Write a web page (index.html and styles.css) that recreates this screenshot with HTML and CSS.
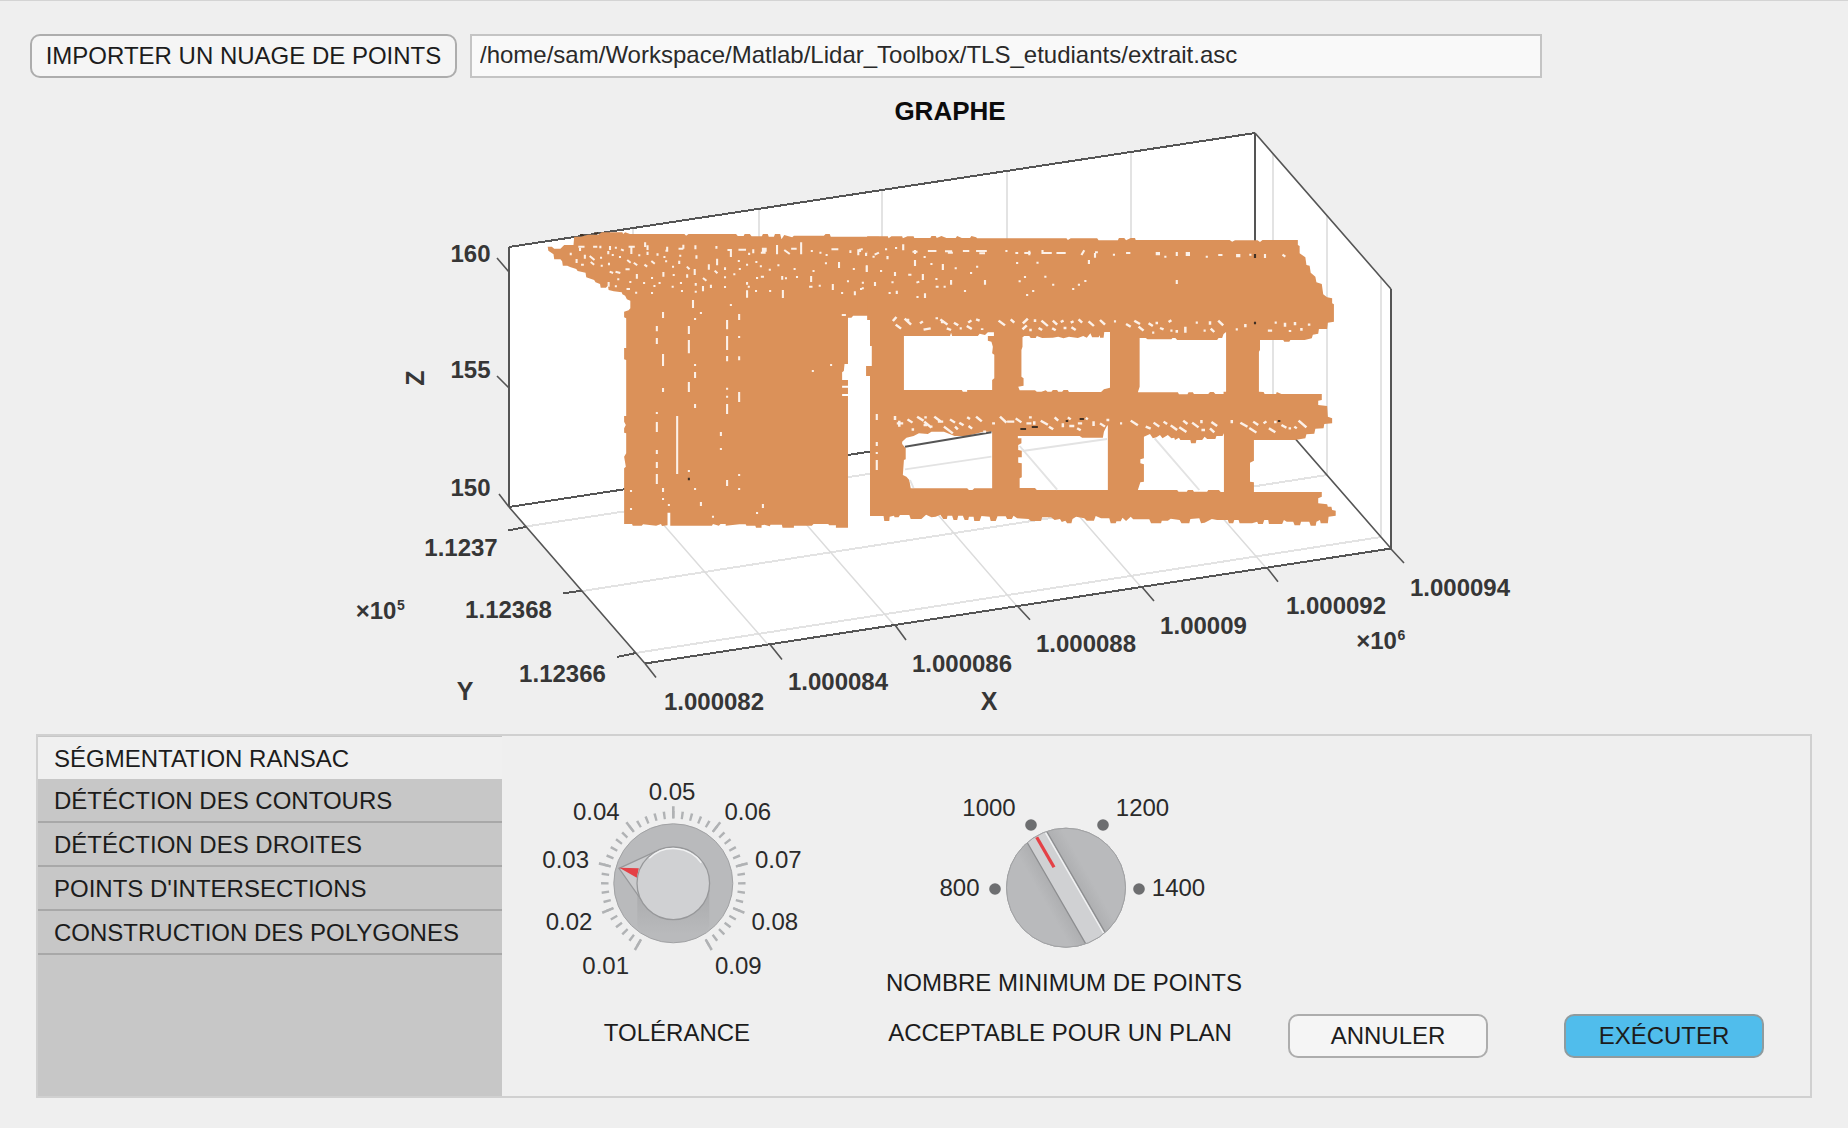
FILE: index.html
```html
<!DOCTYPE html>
<html lang="fr">
<head>
<meta charset="utf-8">
<title>Nuage de points</title>
<link rel="stylesheet" href="styles.css">
</head>
<body>
<header class="toolbar">
  <button class="btn import" type="button">IMPORTER UN NUAGE DE POINTS</button>
  <input class="path" type="text" value="/home/sam/Workspace/Matlab/Lidar_Toolbox/TLS_etudiants/extrait.asc">
</header>

<main>
<svg class="plot" width="1848" height="655" viewBox="0 79 1848 655">
  <text class="title" x="950" y="119.500" text-anchor="middle">GRAPHE</text>
  <!-- walls and floor -->
  <path fill="#fff" d="M509 247 1255 133 1391 289V548.500L645 663.500 509 507Z"/>
  <g class="grid">
    <path class="upright" d="M633 228V490M759 209V469M882 190V451M1007 171V431M1131 152V412M1273 153V412M1327 215V475M1381 277V536"/>
    <path class="upright" d="M526 526.500 1273 412M582.500 591 1327 475M635.500 653 1381 537"/>
    <path class="deep" d="M768 644.500 632 488.600M894 625 758 469M1017.500 606.700 882 450M1141 587 1005 431M1266 567.700 1130 412"/>
  </g>
  <g class="axes">
    <path class="upright" d="M509 247V507M1255 133V392M1391 289V548.500"/>
    <path class="upright" d="M509 247 1255 133M509 507 1255 392.500M645 663.500 1391 548.500"/>
    <path class="thin" d="M1255 133 1391 289M1255 392.500 1391 548.500M509 507 645 663.500"/>
    <path class="thin" d="M645 663.500l11 14M770 644.500l12 15M895 625l11 15M1018 606.700l12 13M1142 587l12 14M1267 567.700l11 14M1391 549l13 14M509 272l-12-14M509 388l-12-12M509 507l-10-13"/>
    <path class="upright" d="M526 527l-18 3.500M582 590.500l-19 3M636 653l-19 4"/>
  </g>

  <!-- facade, left part -->
  <g transform="translate(340 120) scale(.34439 .33333)">
    <path class="cloud" d="M603 380H615L622 386H640L651 375H678L680 350H700L720 344H750L760 337H820L822 342 828 337 842 342H1000L1005 347 1012 342H1150L1155 348H1172L1175 342H1190L1195 349H1225L1228 342H1242L1245 350H1260L1263 342H1278L1282 358 1290 345 1313 352 1318 347H1405L1410 342H1422L1425 350H1565V587H1490L1485 593H1475V732H1465L1463 753 1458 757V780H1475V797H1458V803H1475V822H1458V828H1475V1223H1440V1216H1420L1418 1212H1375L1370 1217H1318V1223H1285L1283 1214H1250L1248 1219 1232 1214 1224 1216V1223H1208L1206 1217H1180L1178 1213H1160L1120 1217V1212H1105L1100 1217 1083 1212 1080 1217H959V1178H951V1216L935 1218 932 1212 918 1217 880 1213 876 1217H850L848 1212H825V1045L830 1040 825 1010 831 1000V940L825 938V925L830 915 825 905V888H831V720L825 718V684H831V595L825 592V575L838 571 843 565V542L833 538 828 527 820 523 818 517 795 514 780 510 778 497 772 503H757L755 492 742 487 738 480 715 472 713 458 690 453 686 447 668 441 660 437H647L645 424 640 418H622L620 403 605 392Z"/>
    <path class="gap" d="M692 380h18M735 380h12M756 377v8M784 378v12M798 383h6M846 382v20M838 380h18M886 367v14M893 376v14M950 380v12M945 392h8M983 386h14M997 374v12M1032 376v12M1093 378v8M1125 390h12M1135 387v24M1157 389h22M1200 388v12M1222 398h14M1225 386h14M1225 392h14M1269 375v28M1290 390l16 12M1310 386h16M1339 367v36M1370 390v6M1392 398h6M1427 388h20M1482 391v8M1505 388v18M1512 388h6M1530 396h10M1530 399h10M1560 393h8"/>
    <path class="gap" d="M697 383v10M687 417v12M711 404v12M725 408l14 12M670 398v8M700 434h8M728 426l10 8M758 410v6M757 437h6M779 393v10M781 428v8M792 402v6M810 411h6M816 388l8 4M834 420l10 8M853 428l10 8M862 462v14M866 406h6M884 434l8 6M893 395v10M904 423l10 8M922 400v7M939 411h6M939 456v14M944 424h6M967 437v6M985 407h6M985 422v10M1007 440l8 8M1008 463v10M1030 447v18M1035 406v10M1054 474l10 8M1054 498v16M1071 433v16M1077 494v10M1088 452l8 8M1095 416v20M1118 442v8M1118 469v6M1142 463h6M1158 420v6M1158 447h6M1188 398v7M1182 431v6M1184 500h6M1206 426h6M1208 474h6M1222 436v6M1222 470h9M1245 449h6M1273 433v6M1284 468v11M1292 475h6M1317 447h6M1324 471h6M1368 468v18M1372 453h6M1362 500h10M1408 430h6M1410 405h6M1449 426v18M1431 492v18M1472 484h6M1489 447h6M1495 514v12M1515 505h6M1530 437v18M1553 486v12M1542 460h6M1390 497h6M1455 519h6M783 455l10 4M800 455l14 4M829 448h12M805 478h6M840 486h6M857 518h6M880 489h6M903 474h6M903 519h6M910 498h6M925 489h6M963 500h6M966 465h6M987 489h6M990 513h6M1033 489v8M1033 512v6M780 486v14M798 499h6M832 507h10M1118 498v6M1182 486v8M1182 511v22M1205 513h6M1246 513h6M1286 510v24"/>
    <path class="gap" d="M1025 540v24M938 576v18M1045 579h6M1031 594v6M1132 555h6M1159 582v18M920 618v16M920 654v18M938 702v36M1013 618v24M1013 660v40M1124 600v28M1124 648v42M1124 708v16M1159 648v6M1159 709v12M1031 732v6M1031 756v18M938 804v12M1013 786v30M1031 852v12M1124 803v6M1124 827v6M1124 852v30M1159 816v30M920 876v6M920 906v30M920 990v12M920 1026v18M920 1062v30M979 888v174M1106 936v12M1106 984v6M1124 1080v18M1159 1062v6M1159 1104v6M1031 1104v6M1013 1050v6M938 1104v12M938 1134v6M845 1110v6M845 1164v6M955 1152v6M1048 1146v12M1080 1190h6M1208 1179h6M1228 1152v12M1370 753h6M1423 735h6M1457 585h12"/>
    <path class="speck" d="M1013 1073v8M697 345h11M738 340h11"/>
  </g>

  <!-- facade, right part -->
  <g transform="translate(860 120) scale(.35714 .33333)">
    <path class="cloud" d="M20 349H78L80 355 88 349H118L120 355 133 349H150L152 354H197L200 348H212L215 354 228 348 242 354H268L272 348 285 354H308L312 348 325 352 328 355H578L582 360 590 355H664L668 361H722L725 354H740L745 361 758 354H770L772 360H1035L1042 365 1050 361H1113L1120 366 1127 360H1226V375L1231 378V400L1247 412 1250 435 1259 437 1262 458 1275 470 1278 487 1293 492 1297 523 1308 532 1322 535V550L1327 553V605L1310 608 1308 627H1285L1283 641 1268 644 1265 655 1245 660H1205L1202 665H1188L1185 660H1120V690L1117 695V815L1130 816 1133 822H1165L1167 816 1180 822H1293V840L1283 842V855L1308 858 1310 890 1322 895V910L1300 912 1298 925 1275 926 1272 941 1250 943 1247 955 1218 960H1103V1022L1092 1028V1085L1103 1087V1116H1293V1130L1283 1135V1150L1308 1153 1310 1160H1320L1322 1170 1332 1172V1187L1312 1190 1310 1210H1290L1288 1200 1278 1205 1276 1217H1262L1258 1205H1235L1232 1216H1217L1213 1205H1195L1187 1200 1182 1212H1145L1143 1200H1132L1128 1212H1115L1112 1205 1098 1210H1063L1060 1200H1048L1045 1210H1033L1030 1200H1000L985 1197 965 1208 955 1210 950 1195 925 1197 922 1210H900L895 1200 870 1196 862 1202H845L843 1210H815L810 1198H765L758 1190 745 1203 735 1193 730 1204H718L716 1210H702L698 1195H675L660 1188 655 1202H635L628 1195 605 1190 595 1197 592 1210H580L575 1202 565 1206 560 1197 545 1200 535 1192H510L507 1203H478L472 1197 440 1195 430 1187 425 1197H412L408 1189H385L380 1203H366L363 1190 340 1188 335 1203H320L318 1190H305L303 1200H293L288 1187H275L272 1200H262L258 1187H245L243 1197H233L225 1184 212 1190 200 1192 185 1184 172 1197H142L138 1185H112L108 1192H97L95 1187 83 1190 82 1203H68L66 1188H28V768H17V738H33V678H28V600H20Z"/>
    <path class="cut" d="M123 648H252L255 638 258 648H330L335 641 350 645 358 637H375V648H358V662L368 665 372 680 370 700 376 704V775L370 780V810H300V815H288L285 810H123Z"/>
    <path class="cut" d="M460 648H474L478 654H492L495 648 510 654 540 653 555 650 570 655 585 650 610 654 625 648 635 653 645 640 650 652H668L672 646V653H682L684 636H700V803L683 808 675 816H585L582 810H570L566 815H555L552 810H540L536 815H525L520 811 508 815H495L490 811H447L443 800 458 797V775L452 770V690L455 680V652Z"/>
    <path class="cut" d="M783 654H800L805 658H872L875 654H883L888 660H1000L1004 654H1014L1018 642 1025 636V815H1018V822H995L990 816H980L975 822H935L932 817H920L917 823H893L890 817H778L783 800Z"/>
    <path class="cut" d="M118 965 130 953 150 948 165 940 190 942 200 935H235L265 948H300L345 935H370V1105H320L315 1110H305L300 1105H142L138 1080 130 1070 120 1065 123 1020 128 1018V985L118 972Z"/>
    <path class="cut" d="M442 948H615L622 953H680L683 935 690 920 694 915V1110H495L490 1104H447V1075L453 1072V1030L443 1028V1012H453V992L443 990V975L452 970V955H442Z"/>
    <path class="cut" d="M795 950 812 942 820 955 830 952 840 945 847 955 862 945 872 955 880 953 882 960 893 953 897 960H925L927 970H940L942 960H958L965 950 972 957H995L998 948 1015 948 1019 940V1116H1010L1005 1110H975L972 1115H935L932 1110H918L915 1115H892L888 1110H778L785 1087 795 1085V1033L785 1030V1018L795 1015Z"/>
    <!-- floor lines seen through the openings -->
    <g class="grid seen">
      <path d="M126 1048 368 1010M140 1080 150 1104M455 993 692 957M447 978 552 1109M825 955 950 1110"/>
    </g>
    <path class="edge" d="M126 980 368 937"/>
    <path class="gap" d="M0 386v10M17 398v10M41 404l12-6M70 388h6M98 384h6M121 373v18M147 395h14M154 390v12M190 393h24M238 394h20M246 398h14M288 393h18M325 393h30M334 400h16M407 393h6M435 399h8M460 399h18M474 392v14M511 390v12M513 399h24M550 399h26M620 405l8-14M658 397h8M658 399v14M708 404h6M745 399h12M831 396v10M837 396v10M852 410h6M887 396v12M915 396v12M921 396v12M968 410h6M1003 405h12M1056 402v10M1062 402v10M1090 404h6M1134 402v12M1183 404l8 6M35 410h6M77 408v10M154 420v18M181 408v6M197 432h6M19 436v20M56 453h6M98 456v12M135 464h9M176 462v18M232 432v18M91 484v6M5 488h6M42 486v12M80 519h6M103 512v10M0 507h6M158 488l8-3M158 531h6M182 520v14M214 474v6M212 500h8M234 500h6M255 480v14M291 513h6M308 459h6M325 440h6M350 480v14M437 429h6M494 428h6M641 420v12M459 471h6M444 484h6M516 470h6M538 494h6M482 513h6M465 525h6M594 507h6M610 494h6M628 483h6M887 480v12M268 442v6"/>
    <path class="gap wide" d="M92 603l10-12M100 614l15 12M125 596l18 18M128 600h10M168 610l8-6M178 629l20-4M215 592v6M225 598l20 16M230 600v10M243 625l12 5M263 608l12 8M279 625h6M303 608l9-7M299 618l14 9M325 598l10 4M342 625v5M388 602l18 14M422 598l10 10M456 610l14-14M455 628l12-12M474 630h7M490 598v8M500 624l10 6M508 602l18 16M540 602l12 12M538 625l10 6M562 606l8-4M570 624h8M590 608l8-4M592 622l12 8M612 598l10 10M640 604l15 14M672 600l14 14M711 604h6M745 612l13 8M768 602l16 10M780 620l14 12M808 610l12 8M818 638h6M831 605v8M840 624l10 4M864 606l8-5M869 632h6M887 630v8M911 620v18M940 608h6M962 632h6M980 604v10M982 626l10 10M1003 602l14 14M1052 628h6M1079 612v10M1142 632h12M1161 608h6M1190 608v12M1204 630v6M1218 606v10M1236 624v8M1254 614h7"/>
    <path class="gap" d="M47 882v18M47 966v12M47 996v6M47 1020v30"/>
    <path class="gap wide" d="M98 888v12M103 910h18M110 902v18M133 898l14 10M148 925v7M160 890l18 12M180 892h7M180 905l20 18M178 915h10M195 920h8M208 890l20 16M218 905h15M235 920l25 20M252 898l14 10M278 908l12 8M266 920l8 8M300 892l8 5M304 918l10 8M325 890l16 14M345 935h8M370 910h8M392 890l18 18M412 905h20M436 895l16 12M473 892h8M466 910h14M488 904v10M506 902l20 12M529 920l12 8M545 892l10 10M568 910v12M582 892l8 6M586 918h14M610 910h12M608 925l10 6M632 894l6 4M654 904v14M672 910l14 10M690 900h8M728 910h6M758 902l20 14M800 920l14 6M822 908l16 12M850 905l10 7M870 916l18 14M894 922l20 14M905 902l12 10M930 908l18 14M956 900v10M956 930h10M980 925l12 12M984 906l16 12M1041 900v10M1065 908l20 12M1090 924l20 14M1101 905l14 10M1130 910l8-6M1145 925l18 12M1163 902v8M1180 915l14 8M1200 925h7M1228 902l22 20M1216 920l7 5"/>
    <path class="speck" d="M1106 402v12M1106 605v8M449 927h16M481 921h17M576 903h7M615 897h12M1170 903h7"/>
  </g>

  <g class="ticks">
    <text x="470.500" y="261.500">160</text><text x="470.500" y="377.500">155</text><text x="470.500" y="495.500">150</text>
    <text x="461" y="555.500">1.1237</text><text x="508.500" y="617.500">1.12368</text><text x="562.500" y="681.500">1.12366</text>
    <text x="714" y="709.500">1.000082</text><text x="838" y="689.500">1.000084</text><text x="962" y="671.500">1.000086</text>
    <text x="1086" y="651.500">1.000088</text><text x="1203.500" y="633.500">1.00009</text><text x="1336" y="613.500">1.000092</text><text x="1460" y="595.500">1.000094</text>
    <text x="376" y="619">×10</text><text class="power" x="401" y="609.500">5</text>
    <text x="1376.500" y="649">×10</text><text class="power" x="1401.500" y="639.500">6</text>
    <text class="name" x="465" y="700">Y</text><text class="name" x="989" y="710">X</text>
    <text class="name" transform="translate(424 378) rotate(-90)">Z</text>
  </g>
</svg>

<section class="panel">
  <nav class="tabs">
    <a class="tab selected">SÉGMENTATION RANSAC</a>
    <a class="tab">DÉTÉCTION DES CONTOURS</a>
    <a class="tab">DÉTÉCTION DES DROITES</a>
    <a class="tab">POINTS D'INTERSECTIONS</a>
    <a class="tab">CONSTRUCTION DES POLYGONES</a>
  </nav>
  <div class="content">
    <figure class="gauge tolerance">
      <svg width="270" height="220" viewBox="538 770 270 220">
        <defs>
          <linearGradient id="shade" x1="0" y1="0" x2="0" y2="1"><stop offset="0" stop-color="#a3a4a6"/><stop offset="1" stop-color="#b9babc"/></linearGradient>
          <clipPath id="round"><circle r="59.500"/></clipPath>
        </defs>
        <g transform="translate(673.300 883.300)">
          <path class="scale" stroke-width="7.500" pathLength="302" stroke-dasharray="2 5.500" d="M-33.200 59.900A68.500 68.500 0 1 1 33.200 59.900"/>
          <path class="scale" stroke-width="12" pathLength="302" stroke-dasharray="2 35.500" d="M-34.400 62.100A71 71 0 1 1 34.400 62.100"/>
          <circle class="disc" r="59.500"/>
          <path fill="url(#shade)" opacity=".75" clip-path="url(#round)" d="M-36 4H36V42Q34 50 25 51H-25Q-34 50-36 42Z"/>
          <path class="needle" d="M-54.300-15-18-31.700-10 0-31.700 17Z"/>
          <path fill="#e44146" d="M-54-15.500-34.500-15-36.500-5.500Z"/>
          <circle class="cap" r="36.300"/>
          <path fill="none" stroke="#f1f2f3" stroke-width="1.500" d="M-24-25A34.700 34.700 0 0 1 28-20.500"/>
        </g>
        <g class="marks">
          <text x="605.700" y="973.500">0.01</text><text x="569" y="929.500">0.02</text><text x="565.700" y="867.500">0.03</text>
          <text x="596.300" y="819.500">0.04</text><text x="672" y="799.500">0.05</text><text x="747.800" y="819.500">0.06</text>
          <text x="778.300" y="867.500">0.07</text><text x="774.800" y="929.500">0.08</text><text x="738.300" y="973.500">0.09</text>
        </g>
      </svg>
      <figcaption>TOLÉRANCE</figcaption>
    </figure>
    <figure class="gauge count">
      <svg width="390" height="190" viewBox="870 770 390 190">
        <defs>
          <linearGradient id="side"><stop offset="0" stop-color="#b9babc"/><stop offset=".7" stop-color="#b9babc"/><stop offset="1" stop-color="#aeafb1"/></linearGradient>
          <linearGradient id="side2"><stop offset="0" stop-color="#aeafb1"/><stop offset=".3" stop-color="#b9babc"/><stop offset="1" stop-color="#b9babc"/></linearGradient>
        </defs>
        <g transform="translate(1066 887.700)">
          <circle class="disc" r="59.500"/>
          <g clip-path="url(#round)">
            <g transform="rotate(-30)">
              <path fill="url(#side)" d="M-60-60H-11V60H-60Z"/>
              <path fill="url(#side2)" d="M11-60H60V60H11Z"/>
              <path fill="#d0d1d3" d="M-11-60H11V60H-11Z"/>
              <path stroke="#8d8e90" stroke-width="1.300" d="M-11-60V60M11.500-60V60"/>
              <path stroke="#f1f2f3" stroke-width="1.300" d="M9.800-60V60"/>
            </g>
          </g>
          <circle r="59.500" fill="none" stroke="#a1a2a4"/>
          <path stroke="#e44146" stroke-width="3.300" d="M-29.300-50.500-12-20.500"/>
        </g>
        <g fill="#6d6e70"><circle cx="1031" cy="825" r="5.800"/><circle cx="1103" cy="825" r="5.800"/><circle cx="995" cy="889" r="5.800"/><circle cx="1139" cy="889" r="5.800"/></g>
        <g class="marks"><text x="959.500" y="895.500">800</text><text x="989" y="815.500">1000</text><text x="1142.500" y="815.500">1200</text><text x="1178.500" y="895.500">1400</text></g>
      </svg>
      <figcaption>NOMBRE MINIMUM DE POINTS<br><span>ACCEPTABLE POUR UN PLAN</span></figcaption>
    </figure>
    <div class="actions">
      <button class="btn" type="button">ANNULER</button>
      <button class="btn primary" type="button">EXÉCUTER</button>
    </div>
  </div>
</section>
</main>
</body>
</html>
```
FILE: styles.css
```css
* { box-sizing: border-box; }
body {
  margin: 0;
  width: 1848px;
  height: 1128px;
  overflow: hidden;
  background: #efefef;
  border-top: 1px solid #d4d4d4;
  color: #1c1c1c;
  font: 24px/44px "Liberation Sans", Arial, sans-serif;
}
.toolbar {
  display: flex;
  gap: 13px;
  height: 78px;
  padding: 33px 0 0 30px;
}
.btn {
  width: 200px;
  height: 44px;
  padding: 0;
  border: 2px solid #adadad;
  border-radius: 10px;
  background: #f5f5f5;
  color: #1c1c1c;
  font: inherit;
  line-height: 38px;
  white-space: nowrap;
}
.btn.import { width: 427px; }
.btn.primary { background: #50bdec; border-color: #8f9b9e; }
.path {
  width: 1072px;
  height: 44px;
  padding: 0 0 3px 8px;
  border: 2px solid #c4c4c4;
  border-radius: 0;
  background: #f9f9f9;
  color: #2a2a2a;
  font: inherit;
}
.plot { display: block; }
.plot text { font-weight: 700; }
.title { font-size: 26px; fill: #0c0c0c; }
.ticks text { fill: #363636; text-anchor: middle; }
.ticks .power { font-size: 14px; }
.ticks .name { font-size: 25px; }
.grid path { fill: none; stroke: #e3e3e3; stroke-width: 2; }
.grid .deep { stroke: #dcdcdc; stroke-width: 1.500; }
.grid.seen path { stroke-width: 5.500; }
.axes path { fill: none; stroke: #555; stroke-width: 2; }
.axes .thin { stroke-width: 1.600; }
.axes .upright, .grid .upright { shape-rendering: crispEdges; }
.cloud { fill: #db9159; }
.cut { fill: #fff; }
.gap { fill: none; stroke: #fcf1e9; stroke-width: 6; }
.gap.wide { stroke-width: 7; }
.speck { fill: none; stroke: #3f3024; stroke-width: 6; }
.edge { fill: none; stroke: #555; stroke-width: 6; }

.panel {
  display: flex;
  width: 1776px;
  height: 364px;
  margin-left: 36px;
  border: 2px solid #d0d0d0;
}
.tabs {
  display: flex;
  flex-direction: column;
  width: 464px;
  padding-top: 1px;
  background: #c7c7c7;
}
.tab {
  height: 44px;
  padding-left: 16px;
  border-bottom: 2px solid #a8a8a8;
  line-height: 44px;
}
.tab.selected {
  height: 42px;
  border: 0;
  background: #f0f0f0;
}
.content { display: flex; flex: 1; }
.gauge {
  margin: 0;
  padding-top: 34px;
  text-align: center;
}
.gauge svg { display: block; }
.marks text { fill: #2a2a2a; text-anchor: middle; }
.tolerance { width: 270px; margin-left: 36px; }
.tolerance figcaption { margin: 21px 0 0 8px; }
.count { width: 390px; margin-left: 62px; }
.count figcaption { line-height: 50px; margin: -2px 2px 0 0; }
.count span { margin-right: 8px; }
.scale { fill: none; stroke: #b0b2b4; }
.disc { fill: #b9babc; stroke: #a1a2a4; }
.needle { fill: #cbccce; stroke: #97989a; stroke-width: 1.300; }
.cap { fill: #d0d1d3; stroke: #97989a; stroke-width: 1.300; }
.actions {
  display: flex;
  gap: 76px;
  margin: 278px 0 0 28px;
}
```
